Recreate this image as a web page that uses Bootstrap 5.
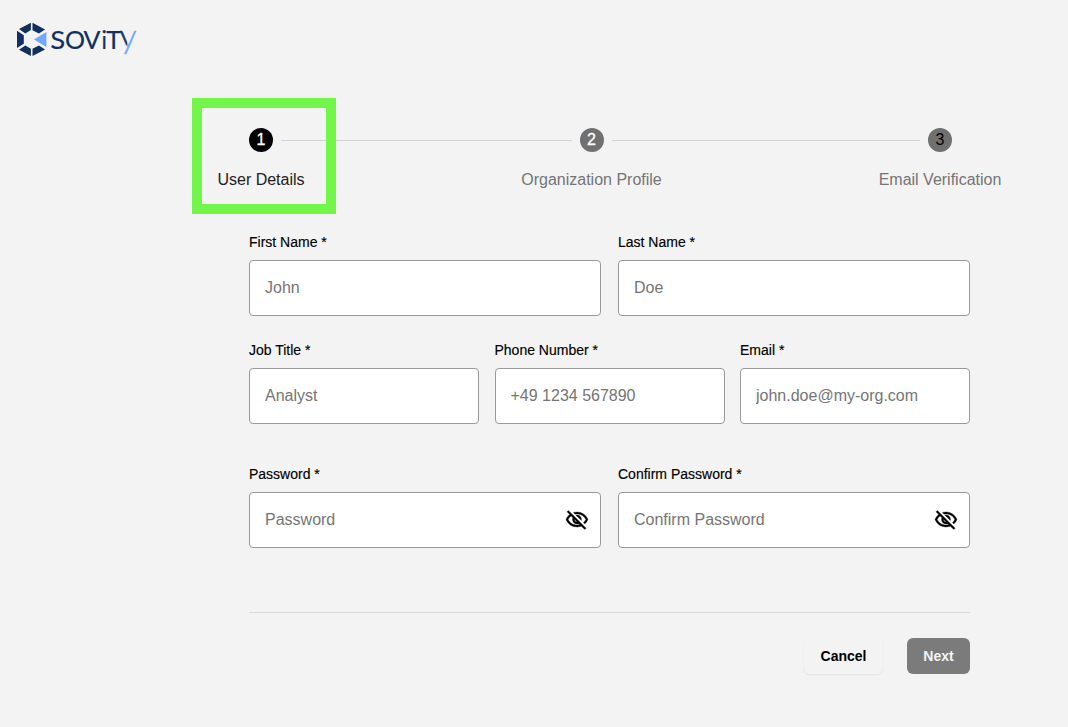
<!DOCTYPE html>
<html lang="en">
<head>
<meta charset="utf-8">
<meta name="viewport" content="width=device-width, initial-scale=1">
<title>sovity – Registration</title>
<link href="https://cdn.jsdelivr.net/npm/bootstrap@5.3.0/dist/css/bootstrap.min.css" rel="stylesheet">
<style>
body{background:#f3f3f3;font-family:"Liberation Sans",Arial,sans-serif;color:#000;min-height:727px}
.brand{height:98px;padding:20px 0 0 14px}
.brand text{font-family:Lato,sans-serif;fill:#12305f;stroke:#12305f;stroke-width:.2}
.brand .tail{fill:url(#tail);stroke:url(#tail);stroke-width:.5}
.stepper{height:116px;padding-left:192px}
.step{padding-top:30px}
.step-first{width:144px;height:116px;border:10px solid #72f649;padding:20px 6px 0 0;position:relative;z-index:1}
.step-mid{width:141px}
.step-last{width:123px}
.dot{width:24px;height:24px;background:#707070;color:#fff;font-size:16px;line-height:24px;-webkit-text-stroke:.3px}
.step-first .dot{background:#000}
.step-last .dot{color:#000;-webkit-text-stroke:0;padding-left:1px}
.step-name{font-size:16px;line-height:24px;margin-top:16px;color:#757575;white-space:nowrap}
.step-first .step-name{color:#212121}
.step-last .step-name{padding-left:1px}
.wire{height:1px;background:#d3d3d3}
.wire-a{width:291px;margin:42px -51px 0 -55px}
.wire-b{width:308px;margin:42px -42px 0 -50px}
.details{width:721px;margin-left:249px;padding-top:18px}
.fields{gap:17px}
.fields.thirds{gap:15.5px;margin-top:24px}
.fields.secrets{margin-top:40px}
.fields>div{flex:1 1 0;min-width:0}
.form-label{font-size:14px;line-height:20px;margin:0 0 8px;display:block;-webkit-text-stroke:.15px}
.form-control,.form-control:focus{height:56px;border:1px solid #999;border-radius:4px;padding:0 15px;font-size:16px;background:#fff}
.form-control::placeholder{color:#757575;opacity:1}
.eye{position:absolute;right:12px;top:16px;padding:0;border:0;background:none;line-height:0}
.rule{height:1px;background:#d9d9d9;margin-top:64px}
.actions{gap:24px;padding-top:25px}
.btn{height:36px;font-size:14px;font-weight:700;border:0;border-radius:6px;padding:0 16px}
.btn-cancel{width:79px;color:#000;box-shadow:0 1px 2px rgba(0,0,0,.07)}
.btn-next,.btn-next:hover{width:63px;background:#7b7b7b;color:#f5f5f5}
</style>
</head>
<body>
<header class="brand">
<svg width="140" height="60" viewBox="14 20 140 60" role="img" aria-label="sovity">
<defs><linearGradient id="tail" gradientUnits="userSpaceOnUse" x1="132.1" y1="28.8" x2="134" y2="29.6"><stop offset=".5" stop-color="#12305f"/><stop offset=".5" stop-color="#70a7ff"/></linearGradient></defs>
<path fill="#12305f" d="M30.9 22.8v7.2l-5.6 3.4-6.3-4.4zM32.5 22.8l12.6 6.6-6.2 4.2-6.4-3.4zM17 30.8l6.8 4.5v8.4l-6.8 4.4zM19 49.8l6.3-4.4 5.6 3.4v7.2zM32.5 56v-7.2l6.4-3.4 6.2 4.2z"/>
<path fill="#70a7ff" d="M34 39.5 46.4 32v15z"/>
<text transform="translate(50.3 48.6) scale(1.1 1)" font-size="25">S</text>
<text x="65" y="48.6" font-size="25">O</text>
<text x="83.4" y="48.6" font-size="25">V</text>
<text transform="translate(101.6 48.6) scale(.9 1)" font-size="25">i</text>
<text x="106.3" y="48.6" font-size="25">T</text>
<text class="tail" x="119.6" y="48.3" font-size="34" font-weight="300">y</text>
</svg>
</header>
<main>
<div class="stepper d-flex align-items-start">
<div class="step step-first flex-shrink-0 d-flex flex-column align-items-center"><span class="dot rounded-circle text-center">1</span><span class="step-name">User Details</span></div>
<div class="wire wire-a flex-shrink-0"></div>
<div class="step step-mid flex-shrink-0 d-flex flex-column align-items-center"><span class="dot rounded-circle text-center">2</span><span class="step-name">Organization Profile</span></div>
<div class="wire wire-b flex-shrink-0"></div>
<div class="step step-last flex-shrink-0 d-flex flex-column align-items-center"><span class="dot rounded-circle text-center">3</span><span class="step-name">Email Verification</span></div>
</div>
<form class="details">
<div class="fields d-flex">
<div><label class="form-label" for="fn">First Name *</label><input id="fn" class="form-control" placeholder="John"></div>
<div><label class="form-label" for="ln">Last Name *</label><input id="ln" class="form-control" placeholder="Doe"></div>
</div>
<div class="fields thirds d-flex">
<div><label class="form-label" for="jt">Job Title *</label><input id="jt" class="form-control" placeholder="Analyst"></div>
<div><label class="form-label" for="ph">Phone Number *</label><input id="ph" class="form-control" placeholder="+49 1234 567890"></div>
<div><label class="form-label" for="em">Email *</label><input id="em" class="form-control" placeholder="john.doe@my-org.com"></div>
</div>
<div class="fields secrets d-flex">
<div><label class="form-label" for="pw">Password *</label><div class="position-relative"><input id="pw" type="password" class="form-control" placeholder="Password"><button type="button" class="eye" aria-label="Show password"><svg width="24" height="24" viewBox="0 0 24 24"><use href="#eye-off"/></svg></button></div></div>
<div><label class="form-label" for="cp">Confirm Password *</label><div class="position-relative"><input id="cp" type="password" class="form-control" placeholder="Confirm Password"><button type="button" class="eye" aria-label="Show password"><svg width="24" height="24" viewBox="0 0 24 24"><use href="#eye-off"/></svg></button></div></div>
</div>
<div class="rule"></div>
<div class="actions d-flex justify-content-end"><button type="button" class="btn btn-cancel">Cancel</button><button type="button" class="btn btn-next">Next</button></div>
</form>
</main>
<svg class="d-none"><symbol id="eye-off" viewBox="0 0 24 24"><path stroke="#000" stroke-width=".3" d="M12 6c3.79 0 7.17 2.13 8.82 5.5-.59 1.22-1.42 2.27-2.41 3.12l1.41 1.41c1.39-1.23 2.49-2.77 3.18-4.53C21.27 7.11 17 4 12 4c-1.27 0-2.49.2-3.64.57l1.65 1.65C10.66 6.09 11.32 6 12 6zm-1.07 1.14L13 9.21c.57.25 1.03.71 1.28 1.28l2.07 2.07c.08-.34.14-.7.14-1.07C16.5 9.01 14.48 7 12 7c-.37 0-.72.05-1.07.14zM2.01 3.87l2.68 2.68C3.06 7.83 1.77 9.53 1 11.5 2.73 15.89 7 19 12 19c1.52 0 2.98-.29 4.32-.82l3.42 3.42 1.41-1.41L3.42 2.45 2.01 3.87zm7.5 7.5 2.61 2.61c-.04.01-.08.02-.12.02-1.38 0-2.5-1.12-2.5-2.5 0-.05.01-.08.01-.13zm-3.4-3.4 1.75 1.75c-.23.55-.36 1.15-.36 1.78 0 2.48 2.02 4.5 4.5 4.5.63 0 1.23-.13 1.77-.36l.98.98c-.88.24-1.8.38-2.75.38-3.79 0-7.17-2.13-8.82-5.5.7-1.43 1.72-2.61 2.93-3.53z"/></symbol></svg>
<script src="https://cdn.jsdelivr.net/npm/bootstrap@5.3.0/dist/js/bootstrap.bundle.min.js"></script>
</body>
</html>
